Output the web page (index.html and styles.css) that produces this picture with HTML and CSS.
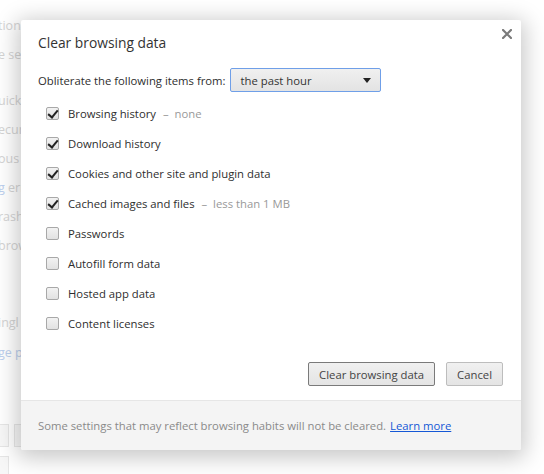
FILE: index.html
```html
<!DOCTYPE html>
<html>
<head>
<meta charset="utf-8">
<link rel="stylesheet" href="styles.css">
</head>
<body>
<div class="page">
  <div class="bg-line l1">tion o</div>
  <div class="bg-line l2">e sea</div>
  <div class="bg-line l3">uickl</div>
  <div class="bg-line l4">ecur</div>
  <div class="bg-line l5">ous</div>
  <div class="bg-line l6"><span class="bg-link">g</span> erro</div>
  <div class="bg-line l7">rash</div>
  <div class="bg-line l8">brow</div>
  <div class="bg-line l9">ingl</div>
  <div class="bg-line l10 bg-link">ge p</div>
  <div class="bg-selects">
    <div class="bg-sel"></div><div class="bg-box"></div>
  </div>
  <div class="bg-selects second">
    <div class="bg-sel"></div>
  </div>
</div>

<div class="dialog">
  <button class="close" aria-label="Close">
    <svg width="10" height="10" viewBox="0 0 10 10"><path d="M1 1 L9 9 M9 1 L1 9" stroke="#7a7a7a" stroke-width="2.2" stroke-linecap="square"/></svg>
  </button>
  <div class="title">Clear browsing data</div>
  <div class="body">
    <div class="range-row">
      <span class="range-label">Obliterate the following items from:</span>
      <div class="select">
        <span>the past hour</span>
        <span class="arrow"></span>
      </div>
    </div>
    <ul class="options">
      <li><span class="cb checked"></span><span class="lbl">Browsing history</span><span class="hint">–&nbsp; none</span></li>
      <li><span class="cb checked"></span><span class="lbl">Download history</span></li>
      <li><span class="cb checked"></span><span class="lbl">Cookies and other site and plugin data</span></li>
      <li><span class="cb checked"></span><span class="lbl">Cached images and files</span><span class="hint">–&nbsp; less than 1 MB</span></li>
      <li><span class="cb"></span><span class="lbl">Passwords</span></li>
      <li><span class="cb"></span><span class="lbl">Autofill form data</span></li>
      <li><span class="cb"></span><span class="lbl">Hosted app data</span></li>
      <li><span class="cb"></span><span class="lbl">Content licenses</span></li>
    </ul>
    <div class="actions">
      <button class="btn primary">Clear browsing data</button>
      <button class="btn">Cancel</button>
    </div>
  </div>
  <div class="footer">Some settings that may reflect browsing habits will not be cleared. <a href="#">Learn more</a></div>
</div>
</body>
</html>
```
FILE: styles.css
```css
* { box-sizing: border-box; }
html, body {
  margin: 0;
  padding: 0;
  width: 544px;
  height: 474px;
  overflow: hidden;
  background: #fff;
  font-family: "Open Sans", "Noto Sans", sans-serif;
}
.page {
  position: relative;
  height: 474px;
  padding-top: 17px;
  color: #d4d4d4;
  font-size: 12.5px;
}
.bg-line {
  height: 18px;
  line-height: 18px;
  white-space: nowrap;
  margin-left: -2px;
}
.bg-link { color: #bcd0ee; }
.l2 { margin-top: 11px; }
.l3 { margin-top: 28px; }
.l4, .l5, .l6, .l7, .l8 { margin-top: 11px; }
.l9 { margin-top: 59px; }
.l10 { margin-top: 12px; }
.bg-selects {
  display: flex;
  gap: 5px;
  margin-top: 62px;
}
.bg-selects.second { margin-top: 9px; }
.bg-sel {
  width: 9px;
  height: 23px;
  border: 1px solid #e6e6e6;
  border-left: none;
  background: #f7f7f7;
}
.bg-box {
  width: 12px;
  height: 23px;
  border: 1px solid #e6e6e6;
  background: #f7f7f7;
}

.dialog {
  position: absolute;
  left: 21px;
  top: 20px;
  width: 500px;
  height: 430px;
  background: #fff;
  border-radius: 2px;
  box-shadow: 0 4px 22px 4px rgba(0,0,0,0.22);
  color: #333;
  display: flex;
  flex-direction: column;
}
.close {
  position: absolute;
  right: 9px;
  top: 9px;
  width: 10px;
  height: 10px;
  padding: 0;
  border: none;
  background: none;
  display: flex;
}
.title {
  padding: 13px 17px 0;
  font-size: 13.8px;
  line-height: 20px;
  color: #333;
}
.body {
  padding: 15px 17px 14px;
  font-size: 11.3px;
  flex: 1;
  color: #2e2e2e;
}
.range-row {
  display: flex;
  align-items: center;
  gap: 4px;
  height: 24px;
}
.select {
  width: 151px;
  height: 24px;
  border: 1px solid #6f9fe8;
  border-radius: 2px;
  background: linear-gradient(#f0f0f0, #e3e3e3);
  display: flex;
  align-items: center;
  justify-content: space-between;
  padding: 0 9px 0 10px;
  color: #333;
}
.arrow {
  width: 0;
  height: 0;
  border-left: 4px solid transparent;
  border-right: 4px solid transparent;
  border-top: 5px solid #222;
}
.options {
  list-style: none;
  margin: 6px 0 0;
  padding: 0 0 0 8px;
}
.options li {
  height: 30px;
  display: flex;
  align-items: center;
}
.cb {
  width: 13px;
  height: 13px;
  border: 1px solid #a8a8a8;
  border-radius: 2px;
  background: linear-gradient(#f2f2f2, #e2e2e2);
  margin-right: 9px;
  position: relative;
  flex: none;
}
.cb.checked::after {
  content: "";
  position: absolute;
  left: 3px;
  top: 0px;
  width: 4px;
  height: 8px;
  border-right: 2px solid #222;
  border-bottom: 2px solid #222;
  transform: rotate(40deg);
}
.hint {
  color: #999;
  margin-left: 7px;
}
.actions {
  display: flex;
  justify-content: flex-end;
  gap: 11px;
  margin-top: 24px;
  padding-right: 1px;
}
.btn {
  height: 24px;
  padding: 0 10px;
  font: inherit;
  font-size: 11.3px;
  color: #444;
  border: 1px solid #bdbdbd;
  border-radius: 2px;
  background: linear-gradient(#f0f0f0, #e4e4e4);
}
.btn.primary { border-color: #7a7a7a; }
.footer {
  height: 50px;
  border-top: 1px solid #e6e6e6;
  background: #f4f4f4;
  font-size: 11.3px;
  color: #8a8a8a;
  padding: 0 17px;
  display: flex;
  align-items: center;
  border-radius: 0 0 2px 2px;
}
.footer a {
  color: #1558d6;
  text-decoration: underline;
  margin-left: 4px;
}
```
